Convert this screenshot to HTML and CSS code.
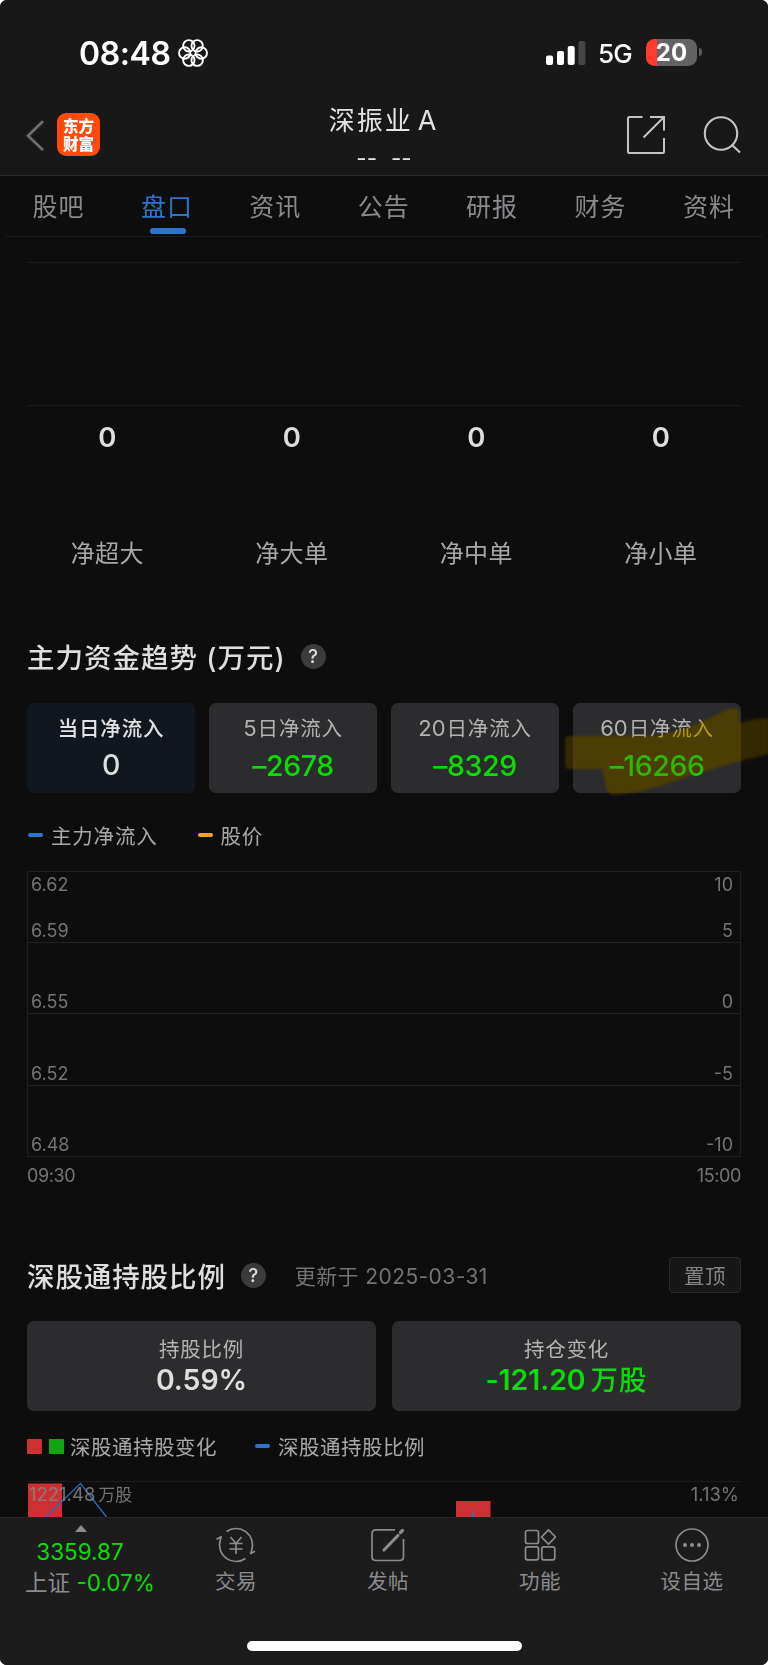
FILE: index.html
```html
<!DOCTYPE html>
<html lang="zh-CN">
<head>
<meta charset="utf-8">
<title>深振业A</title>
<link rel="stylesheet" href="styles.css">
</head>
<body>
<div class="phone">
  <header class="top">
    <div class="status">
      <div class="status-left">
        <span class="clock">08:48</span>
        <svg class="flower" width="32" height="30" viewBox="-16 -15 32 30" fill="none" stroke="#fff" stroke-width="1.9">
          <circle cx="8.3" cy="0" r="5.7"/><circle cx="4.15" cy="7.2" r="5.7"/><circle cx="-4.15" cy="7.2" r="5.7"/>
          <circle cx="-8.3" cy="0" r="5.7"/><circle cx="-4.15" cy="-7.2" r="5.7"/><circle cx="4.15" cy="-7.2" r="5.7"/>
        </svg>
      </div>
      <div class="status-right">
        <svg width="40" height="26" viewBox="0 0 40 26"><g fill="#fff"><rect x="0" y="15.500" width="7" height="9.500" rx="2"/><rect x="11" y="11" width="7" height="14" rx="2"/><rect x="21.700" y="6" width="7" height="19" rx="2"/></g><rect x="32.400" y="1" width="7" height="24" rx="2" fill="#464646"/></svg>
        <span class="net">5G</span>
        <span class="battery"><span class="level">20</span></span>
        <span class="battery-tip"></span>
      </div>
    </div>
    <div class="nav">
      <div class="nav-left">
        <svg width="18" height="32" viewBox="0 0 18 32" fill="none" stroke="#6e6e6e" stroke-width="2.700"><path d="M17 1.200L2 15.800l15 14.200"/></svg>
        <div class="logo"><span>东方</span><span>财富</span></div>
      </div>
      <div class="nav-title"><div class="stock">深振业<span class="letter">A</span></div><div class="dashes"><span>--</span><span>--</span></div></div>
      <div class="nav-right">
        <svg width="38" height="38" viewBox="0 0 38 38" fill="none" stroke="#c4c4c4" stroke-width="2"><path d="M15.500 1H2.500Q1 1 1 2.500V35.500Q1 37 2.500 37H35.500Q37 37 37 35.500V22M23 1H37V14.500M36.500 1.500L16.500 21.500"/></svg>
        <svg width="38" height="38" viewBox="0 0 38 38" fill="none" stroke="#c4c4c4" stroke-width="2.100"><circle cx="18" cy="17.500" r="16.200"/><path d="M28.500 28.500l8.500 8"/></svg>
      </div>
    </div>
  </header>
  <nav class="tabs"><span>股吧</span><span class="on">盘口</span><span>资讯</span><span>公告</span><span>研报</span><span>财务</span><span>资料</span></nav>
  <main>
    <div class="bars"></div>
    <div class="orders">
      <div><b>0</b><span>净超大</span></div><div><b>0</b><span>净大单</span></div><div><b>0</b><span>净中单</span></div><div><b>0</b><span>净小单</span></div>
    </div>
    <div class="heading trend"><h2>主力资金趋势 (万元)</h2><i class="help">?</i></div>
    <div class="cards four">
      <div class="card active"><span>当日净流入</span><strong>0</strong></div>
      <div class="card"><span><em>5</em>日净流入</span><strong>–2678</strong></div>
      <div class="card"><span><em>20</em>日净流入</span><strong>–8329</strong></div>
      <div class="card"><span><em>60</em>日净流入</span><strong>–16266</strong></div>
      <svg class="marker multiply" width="208" height="96" viewBox="0 0 208 96"><path d="M4 33Q4 29 8 29H84C115 28 140 16 165 3Q175 -1 178 4V16Q195 11 208 12V47C180 53 150 62 120 72Q75 88 54 88Q48 89 46 82L41 62H8Q4 62 4 58Z"/></svg>
      <svg class="marker screen" width="208" height="96" viewBox="0 0 208 96"><path d="M4 33Q4 29 8 29H84C115 28 140 16 165 3Q175 -1 178 4V16Q195 11 208 12V47C180 53 150 62 120 72Q75 88 54 88Q48 89 46 82L41 62H8Q4 62 4 58Z"/></svg>
    </div>
    <div class="legend"><i class="dash blue"></i><span>主力净流入</span><i class="dash orange"></i><span>股价</span></div>
    <div class="chart">
      <div class="band first"><p><span>6.62</span><span>10</span></p><p><span>6.59</span><span>5</span></p></div>
      <div class="band"><p><span>6.55</span><span>0</span></p></div>
      <div class="band"><p><span>6.52</span><span>-5</span></p></div>
      <div class="band"><p><span>6.48</span><span>-10</span></p></div>
    </div>
    <div class="times"><span>09:30</span><span>15:00</span></div>
    <div class="heading hold"><h2>深股通持股比例</h2><i class="help">?</i><span class="updated">更新于 2025-03-31</span><button>置顶</button></div>
    <div class="cards two">
      <div class="card"><span>持股比例</span><strong>0.59%</strong></div>
      <div class="card"><span>持仓变化</span><strong>-121.20<em>万股</em></strong></div>
    </div>
    <div class="legend second"><i class="box red"></i><i class="box green"></i><span>深股通持股变化</span><i class="dash blue"></i><span>深股通持股比例</span></div>
    <div class="holding">
      <svg class="plot" width="714" height="35" viewBox="0 0 714 35"><path d="M1 1.500h34V35H1zM429 19h34.500v16H429z" fill="#cc3032"/><path d="M18.500 35L53.500 1.500 79.500 35" fill="none" stroke="#2c67b2" stroke-width="1.500"/><path d="M444 35l2-8 2 8z" fill="#655e94"/></svg>
      <span>1221.48<em>万股</em></span><span>1.13%</span>
    </div>
  </main>
  <footer>
    <div class="index"><i class="up"></i><div class="points">3359.87</div><div class="change"><span>上证</span> -0.07%</div></div>
    <div class="item"><svg width="40" height="36" viewBox="-20 -18 40 36" fill="none" stroke="#8b8b90" stroke-width="1.700"><path d="M-9.460 -13.520A16.500 16.500 0 0 1 15.800 4.800L14.600 8.800M14 8.800l5-2.500M9.460 13.520A16.500 16.500 0 0 1 -15.800 -4.800L-14.600-8.800M-19.500-5.800l5.200-2.800"/><path d="M-5.500-8L0-1.500 5.500-8M0-1.500V9M-6.500-1.500h13M-6.500 4h13"/></svg><span>交易</span></div>
    <div class="item"><svg width="40" height="36" viewBox="-20 -18 40 36" fill="none" stroke="#8b8b90" stroke-width="1.700"><path d="M7-15.200H-12Q-16-15.200-16-11.200V11.500Q-16 15.500-12 15.500H11.500Q15.500 15.500 15.500 11.500V-6"/><path d="M-4 5L10-9.500M12.500-12.500l2-2" stroke-width="3.200" stroke-linecap="round"/></svg><span>发帖</span></div>
    <div class="item"><svg width="40" height="36" viewBox="-20 -18 40 36" fill="none" stroke="#8b8b90" stroke-width="1.700"><rect x="-14.500" y="-14.500" width="13" height="13" rx="2"/><rect x="-14.500" y="1.800" width="13" height="13" rx="2"/><rect x="1.800" y="1.800" width="13" height="13" rx="2"/><path d="M8.500-15.200l7 7.200-7 7.200-7-7.200z" stroke-linejoin="round"/></svg><span>功能</span></div>
    <div class="item"><svg width="40" height="36" viewBox="-20 -18 40 36" fill="none" stroke="#8b8b90" stroke-width="1.700"><circle r="16"/><g fill="#8b8b90" stroke="none"><circle cx="-7" r="2"/><circle r="2"/><circle cx="7" r="2"/></g></svg><span>设自选</span></div>
    <div class="home"></div>
  </footer>
</div>
</body>
</html>
```
FILE: styles.css
```css
* { box-sizing: border-box; }
body { margin: 0; background: #fff; font-family: Inter, "Noto Sans CJK SC", sans-serif; }
i, em { font-style: normal; }
.phone { width: 768px; height: 1665px; background: #0d0d0d; border-radius: 7px; overflow: hidden; display: flex; flex-direction: column; }
.top { height: 176px; background: #181818; border-bottom: 1px solid #2a2a2a; flex: none; }
.status { height: 104px; padding: 1px 66px 0 79px; display: flex; align-items: center; justify-content: space-between; }
.status-left, .status-right { display: flex; align-items: center; color: #fff; }
.clock { font-size: 32px; font-weight: 600; letter-spacing: -0.4px; width: 98px; white-space: nowrap; padding-top: 1px; }
.net { font-size: 26px; font-weight: 500; margin-left: 12px; width: 48px; letter-spacing: -0.8px; padding-top: 1px; }
.battery { width: 51px; height: 27px; margin-top: -1px; border-radius: 8.500px; background: linear-gradient(90deg, #ff3b30 10.500px, #636363 10.500px); display: flex; justify-content: center; align-items: center; }
.level { font-size: 24px; font-weight: 700; line-height: 27px; }
.battery-tip { width: 3px; height: 8px; margin: -1px 0 0 2px; border-radius: 0 4px 4px 0; background: #5a5a5a; }
.nav { height: 71px; display: grid; grid-template-columns: 200px 1fr 200px; }
.nav-left { display: flex; align-items: flex-start; padding: 16px 0 0 26px; }
.logo { width: 43px; height: 43px; margin: -7px 0 0 13px; background: #ff4a08; border-radius: 9px; color: #fff; font: 900 15.500px/18px "Noto Sans CJK SC", sans-serif; padding-top: 3px; display: flex; flex-direction: column; align-items: center; }
.nav-title { text-align: center; color: #e3e3e3; }
.stock { font-size: 26px; line-height: 34px; letter-spacing: 2px; margin-left: -3px; }
.letter { margin-left: 5px; letter-spacing: 0; font-size: 27px; }
.dashes { display: flex; justify-content: center; gap: 14px; font-size: 22.500px; line-height: 30px; margin-top: 5px; }
.nav-right { display: flex; padding: 12px 0 0 59px; gap: 38px; }
.tabs { height: 61px; flex: none; margin: 0 6px; padding: 0 20px 0 19.500px; border-bottom: 1px solid #1c1c1c; display: flex; justify-content: space-between; color: #8a8a8e; font-size: 25px; line-height: 63px; letter-spacing: 1px; }
.tabs span { width: 66px; text-align: center; }
.tabs .on { color: #2f74c7; display: flex; flex-direction: column; align-items: center; }
.on::after { content: ""; width: 36px; height: 6px; margin: -11px 0 0 2px; border-radius: 3px; background: #2f74c7; }
main { height: 1280px; padding: 25px 27px 0; flex: none; }
.bars { height: 144px; border: solid #1b1b1b; border-width: 1px 0; }
.orders { height: 215px; margin: 0 -12px; display: grid; grid-template-columns: repeat(4, 1fr); text-align: center; color: #a8a8a8; font-size: 24px; }
.orders div { display: flex; flex-direction: column; padding-top: 11px; }
.orders b { height: 119px; color: #dedede; font-size: 27.500px; font-weight: 600; line-height: 40px; }
.orders span { line-height: 36px; letter-spacing: .3px; }
.heading { display: flex; align-items: center; height: 36px; }
.trend { margin-top: 17px; }
.heading h2 { margin: 0; color: #dedede; font-size: 27.500px; font-weight: 500; letter-spacing: .9px; white-space: nowrap; }
.trend h2 { letter-spacing: 1px; }
.help { width: 25px; height: 25px; border-radius: 50%; background: #3b3b3b; color: #ddd; font-size: 19px; font-weight: 500; line-height: 25px; text-align: center; margin-left: 15px; }
.cards { display: grid; position: relative; text-align: center; height: 90px; }
.four { grid-template-columns: repeat(4, 168px); gap: 14px; margin-top: 29px; }
.two { grid-template-columns: 349px 349px; gap: 16px; margin-top: 28px; }
.card { background: #2c2c2e; border-radius: 7px; display: flex; flex-direction: column; padding-top: 9px; color: #b3b3b3; }
.card span { font-size: 20.500px; line-height: 32px; letter-spacing: .8px; }
.card em { font-size: 22px; margin-right: 1px; letter-spacing: 0; }
.card strong { font-size: 28.500px; font-weight: 500; line-height: 41px; color: #0bdc05; letter-spacing: -.4px; }
.card.active { background: #10171f; color: #e3e3e3; padding-top: 10px; }
.active span { font-weight: 500; }
.card.active strong { color: #dedede; line-height: 39px; }
.two .card { padding-top: 13px; }
.two strong { font-weight: 600; line-height: 28px; letter-spacing: -.1px; }
.two .card:first-child strong { color: #dedede; }
.two .card em { margin: 0 0 0 5px; font-size: 27.500px; letter-spacing: 1px; font-weight: 500; }
.marker { position: absolute; left: 534px; top: 4px; filter: blur(1px); }
.multiply { fill: #ebc814; mix-blend-mode: multiply; }
.screen { fill: #281e00; mix-blend-mode: screen; }
.legend { display: flex; align-items: center; height: 30px; margin-top: 27px; color: #a8a8a8; font-size: 20.500px; letter-spacing: .8px; }
.dash { width: 15px; height: 4px; border-radius: 2px; margin: 0 8px 0 1px; }
.blue { background: #2f74c7; }
.orange { background: #f7a325; }
.legend span + .dash { margin-left: 40px; }
.box { width: 15px; height: 15px; border-radius: 1px; margin-right: 6.500px; }
.red { background: #cc3032; }
.green { background: #11a511; }
.second { margin-top: 20px; letter-spacing: .5px; }
.second span + .dash { margin-left: 38px; }
.chart { height: 286px; margin-top: 21px; border: 1px solid #1f1f1f; color: #747474; font-size: 18px; }
.band { height: 71.500px; border-bottom: 1px solid #232323; display: flex; flex-direction: column; justify-content: flex-end; }
.band:first-child { height: 70.500px; }
.band:last-child { border: 0; height: 70.500px; }
.band p { display: flex; justify-content: space-between; margin: 0; padding: 0 7px 0 3px; line-height: 22px; }
.first { justify-content: space-between; padding-top: 2px; }
.times { display: flex; justify-content: space-between; color: #747474; font-size: 18px; line-height: 38px; letter-spacing: -.4px; }
.hold { margin-top: 62px; }
.updated { margin-left: 29px; color: #747474; font-size: 21px; letter-spacing: .4px; }
button { margin-left: auto; width: 72px; height: 36px; border: 1px solid #292929; border-radius: 4px; background: #171717; color: #858585; font: 20.500px/32px "Noto Sans CJK SC", sans-serif; padding: 0; letter-spacing: .5px; }
.holding { position: relative; display: flex; justify-content: space-between; height: 36px; margin-top: 20px; border-top: 1px solid #1c1c1c; color: #858585; font-size: 18.500px; line-height: 25px; padding: 0 2px 0 2px; }
.plot { position: absolute; left: 0; top: 0; }
.holding span { position: relative; opacity: .85; }
.holding em { margin-left: 3px; font-size: 17px; }
footer { position: relative; height: 148px; background: #1c1c1c; border-top: 1px solid #262626; display: grid; grid-template-columns: 160px repeat(4, 152px); color: #8b8b90; }
.index { display: flex; flex-direction: column; align-items: center; padding-top: 7px; }
.up { border: solid transparent; border-width: 0 6px 7px; border-bottom-color: #8b8b90; margin-left: 1px; }
.points { color: #0bdc05; font-size: 22.500px; line-height: 32px; margin-top: 4px; }
.change { color: #0bdc05; font-size: 22.500px; line-height: 30px; padding-left: 20px; white-space: nowrap; }
.change span { color: #8b8b90; }
.item { display: flex; flex-direction: column; align-items: center; padding-top: 9px; font-size: 20.500px; line-height: 32px; letter-spacing: .5px; }
.item span { margin-top: 3px; }
.home { position: absolute; left: 247px; top: 123px; width: 275px; height: 10px; border-radius: 5px; background: #fff; }
```
